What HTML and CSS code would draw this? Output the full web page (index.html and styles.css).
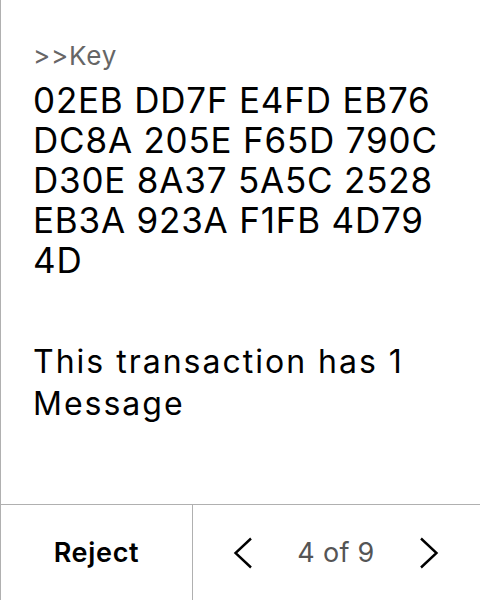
FILE: index.html
```html
<!DOCTYPE html>
<html lang="en">
<head>
<meta charset="utf-8">
<title>Review</title>
<link rel="stylesheet" href="styles.css">
</head>
<body>
<div class="screen">
  <main class="content">
    <div class="label">&gt;&gt;Key</div>
    <div class="key">02EB DD7F E4FD EB76 DC8A 205E F65D 790C D30E 8A37 5A5C 2528 EB3A 923A F1FB 4D79 4D</div>
    <div class="message">This transaction has 1 Message</div>
  </main>
  <footer class="bar">
    <div class="reject">Reject</div>
    <div class="pager">
      <svg class="chev" width="20" height="32" viewBox="0 0 20 32"><path d="M18 1.5 L2.5 16 L18 30.5" fill="none" stroke="#000" stroke-width="2.4"/></svg>
      <span class="count">4 of 9</span>
      <svg class="chev" width="20" height="32" viewBox="0 0 20 32"><path d="M2 1.5 L17.5 16 L2 30.5" fill="none" stroke="#000" stroke-width="2.4"/></svg>
    </div>
  </footer>
</div>
</body>
</html>
```

FILE: styles.css
```css
* { box-sizing: border-box; }
html, body { margin: 0; padding: 0; background: #fff; }
body { font-family: Inter, "Noto Sans", sans-serif; color: #000; }
.screen {
  width: 480px;
  height: 600px;
  display: flex;
  flex-direction: column;
  border-left: 1px solid #b0b0b0;
}
.content {
  flex: 1;
  padding: 40px 28px 0 32px;
}
.label {
  font-size: 26px;
  line-height: 32px;
  letter-spacing: 0.8px;
  color: #666;
}
.key {
  margin-top: 8px;
  font-size: 35px;
  line-height: 40px;
  letter-spacing: 0.8px;
}
.message {
  margin-top: 61px;
  font-size: 32px;
  line-height: 42px;
  letter-spacing: 2px;
}
.bar {
  height: 96px;
  border-top: 1px solid #b0b0b0;
  display: flex;
}
.reject {
  width: 192px;
  border-right: 1px solid #b0b0b0;
  display: flex;
  align-items: center;
  justify-content: center;
  font-size: 27px;
  font-weight: 600;
  letter-spacing: 0.7px;
}
.pager {
  flex: 1;
  display: flex;
  align-items: center;
  justify-content: space-between;
  padding: 0 41px 0 40px;
}
.count {
  font-size: 27px;
  letter-spacing: 0.3px;
  color: #555;
}
.chev { display: block; }
```
